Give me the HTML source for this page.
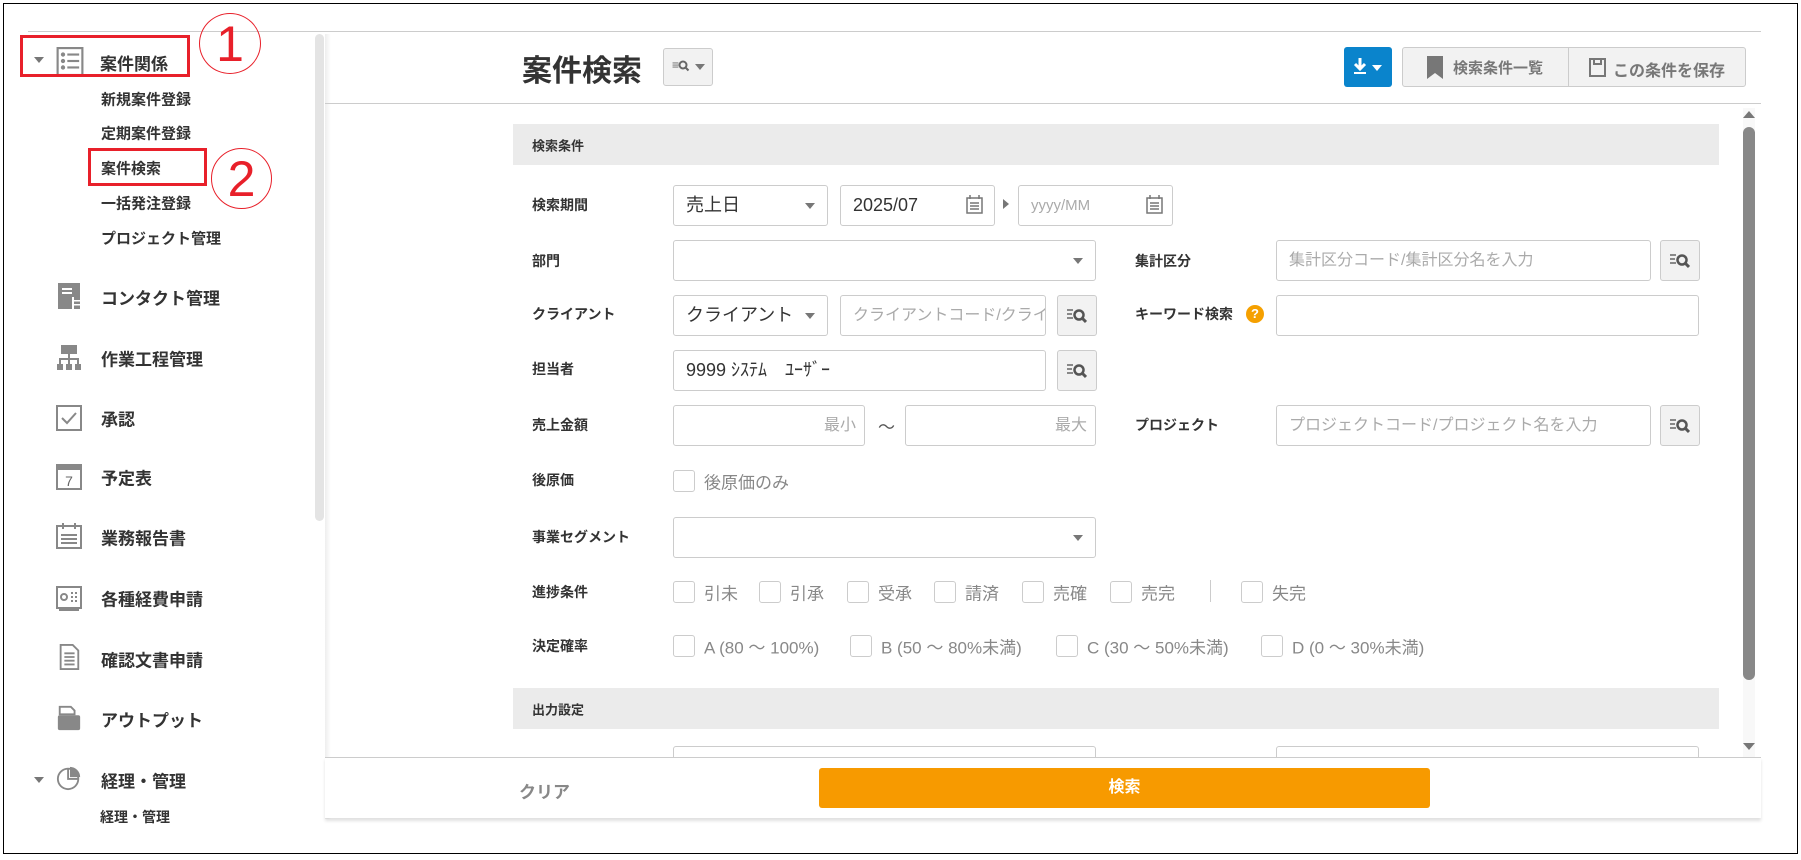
<!DOCTYPE html>
<html><head><meta charset="utf-8"><style>
*{box-sizing:border-box;margin:0;padding:0}
body{width:1801px;height:860px;background:#fff;position:relative;overflow:hidden;font-family:"Liberation Sans","Noto Sans CJK JP",sans-serif;color:#333}
.a{position:absolute}
.b{font-weight:bold}
.si{position:absolute;left:101px;font-size:17px;font-weight:bold;transform:translateY(-50%);white-space:nowrap}
.sub{position:absolute;left:101px;font-size:15px;font-weight:bold;transform:translateY(-50%);white-space:nowrap}
.lb{position:absolute;left:532px;font-size:14px;font-weight:bold;transform:translateY(-50%);white-space:nowrap}
.in{position:absolute;border:1px solid #ccc;border-radius:3px;background:#fff;height:41px;font-size:18px;line-height:39px;padding-left:12px;white-space:nowrap;overflow:hidden}
.ph{color:#aaa;font-size:16px}
.dd:after{content:"";position:absolute;right:12px;top:17px;border-left:5px solid transparent;border-right:5px solid transparent;border-top:6px solid #777}
.sb{position:absolute;width:40px;height:41px;border:1px solid #ccc;border-radius:3px;background:#f2f2f2}
.cb{position:absolute;width:22px;height:22px;border:1px solid #ccc;border-radius:3px;transform:translateY(-50%)}
.ct{position:absolute;font-size:17px;color:#888;transform:translateY(-50%);white-space:nowrap}
.ic{position:absolute;left:56px;width:26px;height:26px}
.circ{position:absolute;border:1.5px solid #e8202a;border-radius:50%;color:#e8202a;font-size:50px;text-align:center;line-height:60px}
</style></head><body>
<div class="a" style="left:3px;top:3px;width:1795px;height:851px;border:1px solid #000"></div>
<div class="a" style="left:28px;top:31px;width:1733px;height:1px;background:#ccc"></div>
<!-- sidebar -->
<div class="a" style="left:315px;top:34px;width:9px;height:487px;background:#e4e4e4;border-radius:5px"></div>
<div class="a" style="left:325px;top:34px;width:6px;height:785px;background:linear-gradient(90deg,#eee,#fff)"></div>
<div class="a" style="left:34px;top:57px;border-left:5px solid transparent;border-right:5px solid transparent;border-top:6px solid #777"></div>
<svg class="a" style="left:56px;top:47px" width="28" height="28" viewBox="0 0 25 26"><rect x="1" y="1" width="23" height="25" fill="none" stroke="#888" stroke-width="2"/><circle cx="6" cy="7" r="2" fill="#888"/><circle cx="6" cy="13" r="2" fill="#888"/><circle cx="6" cy="19" r="2" fill="#888"/><rect x="10" y="6" width="11" height="2" fill="#888"/><rect x="10" y="12" width="11" height="2" fill="#888"/><rect x="10" y="18" width="11" height="2" fill="#888"/></svg>
<div class="a b" style="left:100px;top:50px;font-size:17px">案件関係</div>
<div class="a" style="left:20px;top:35px;width:170px;height:42px;border:3px solid #e8202a"></div>
<div class="circ" style="left:199px;top:13px;width:62px;height:61px">1</div>
<div class="sub" style="top:99px">新規案件登録</div>
<div class="sub" style="top:133px">定期案件登録</div>
<div class="sub" style="top:168px">案件検索</div>
<div class="a" style="left:88px;top:148px;width:119px;height:38px;border:3px solid #e8202a"></div>
<div class="circ" style="left:211px;top:148px;width:61px;height:61px">2</div>
<div class="sub" style="top:203px">一括発注登録</div>
<div class="sub" style="top:238px">プロジェクト管理</div>

<svg class="ic" style="top:283px" viewBox="0 0 26 26"><rect x="2" y="0" width="22" height="26" fill="#888"/><rect x="6" y="5" width="10" height="2" fill="#fff"/><rect x="6" y="9" width="10" height="2" fill="#fff"/><rect x="16" y="14" width="2" height="12" fill="#fff"/><rect x="18" y="17" width="6" height="1.5" fill="#fff"/><rect x="18" y="21" width="6" height="1.5" fill="#fff"/></svg>
<div class="si" style="top:297px">コンタクト管理</div>
<svg class="ic" style="top:345px" viewBox="0 0 26 26"><rect x="5" y="0" width="16" height="9" fill="#888"/><path d="M13 9v5M3 14h20M4 14v6M13 14v6M22 14v6" stroke="#888" stroke-width="2" fill="none"/><rect x="1" y="19" width="6" height="6" fill="#888"/><rect x="10" y="19" width="6" height="6" fill="#888"/><rect x="19" y="19" width="6" height="6" fill="#888"/></svg>
<div class="si" style="top:358px">作業工程管理</div>
<svg class="ic" style="top:405px" viewBox="0 0 26 26"><rect x="1" y="1" width="24" height="24" fill="none" stroke="#888" stroke-width="2"/><path d="M6 13l5 5 9-10" stroke="#888" stroke-width="2" fill="none"/></svg>
<div class="si" style="top:418px">承認</div>
<svg class="ic" style="top:464px" viewBox="0 0 26 26"><rect x="1" y="1" width="24" height="24" fill="none" stroke="#888" stroke-width="2"/><rect x="1" y="1" width="24" height="5" fill="#888"/><text x="13" y="22" font-size="14" fill="#666" text-anchor="middle" font-family="Liberation Sans">7</text></svg>
<div class="si" style="top:477px">予定表</div>
<svg class="ic" style="top:523px" viewBox="0 0 26 26"><rect x="1" y="3" width="24" height="22" fill="none" stroke="#888" stroke-width="2"/><path d="M7 0v6M19 0v6M5 12h16M5 16h16M5 20h16" stroke="#888" stroke-width="2"/></svg>
<div class="si" style="top:537px">業務報告書</div>
<svg class="ic" style="top:585px" viewBox="0 0 26 26"><rect x="1" y="2" width="24" height="21" fill="none" stroke="#888" stroke-width="2"/><circle cx="8" cy="12" r="3" fill="none" stroke="#888" stroke-width="2"/><path d="M15 8h2M19 8h2M15 12h2M19 12h2M15 16h2M19 16h2M3 25h20" stroke="#888" stroke-width="2"/></svg>
<div class="si" style="top:598px">各種経費申請</div>
<svg class="ic" style="top:644px" viewBox="0 0 26 28"><path d="M4 1h13l6 6v20H4z" fill="none" stroke="#888" stroke-width="2"/><path d="M8 10h11M8 14h11M8 18h11M8 22h11" stroke="#888" stroke-width="2"/></svg>
<div class="si" style="top:659px">確認文書申請</div>
<svg class="ic" style="top:705px" viewBox="0 0 26 28"><path d="M3 2h12l4 4v4H3z" fill="none" stroke="#888" stroke-width="2"/><rect x="1" y="11" width="24" height="16" rx="2" fill="#888"/></svg>
<div class="si" style="top:719px">アウトプット</div>
<div class="a" style="left:34px;top:777px;border-left:5px solid transparent;border-right:5px solid transparent;border-top:6px solid #777"></div>
<svg class="ic" style="top:765px" viewBox="0 0 26 28"><circle cx="12" cy="15" r="11" fill="none" stroke="#888" stroke-width="2"/><path d="M14 2a11 11 0 0 1 11 11H14z" fill="#888"/><path d="M12 4v11h11" stroke="#888" stroke-width="2" fill="none"/></svg>
<div class="si" style="top:780px">経理・管理</div>
<div class="a b" style="left:100px;top:807px;font-size:14px">経理・管理</div>

<!-- header -->
<div class="a b" style="left:522px;top:46px;font-size:30px;color:#333">案件検索</div>
<div class="a" style="left:663px;top:48px;width:50px;height:38px;border:1px solid #ccc;border-radius:3px;background:#f2f2f2"></div>
<div class="a" style="left:672px;top:58px;font-size:12px;color:#666">≡</div>
<svg class="a" style="left:678px;top:60px" width="12" height="12"><circle cx="5" cy="5" r="3.5" fill="none" stroke="#666" stroke-width="2"/><path d="M7.5 7.5l3 3" stroke="#666" stroke-width="2"/></svg>
<div class="a" style="left:695px;top:64px;border-left:5px solid transparent;border-right:5px solid transparent;border-top:6px solid #777"></div>
<div class="a" style="left:1344px;top:47px;width:48px;height:40px;background:#0a84cc;border-radius:3px"></div>
<svg class="a" style="left:1353px;top:57px" width="32" height="20"><path d="M7 1v10M2 7l5 5 5-5" stroke="#fff" stroke-width="3" fill="none"/><rect x="1" y="15" width="12" height="2" fill="#fff"/><path d="M19 8h10l-5 6z" fill="#fff"/></svg>
<div class="a" style="left:1402px;top:47px;width:344px;height:40px;border:1px solid #ccc;border-radius:3px;background:#f2f2f2"></div>
<div class="a" style="left:1568px;top:48px;width:1px;height:38px;background:#ccc"></div>
<svg class="a" style="left:1427px;top:56px" width="16" height="24"><path d="M0 0h16v23l-8-6-8 6z" fill="#777"/></svg>
<div class="a b" style="left:1453px;top:57px;font-size:15px;color:#777">検索条件一覧</div>
<svg class="a" style="left:1589px;top:58px" width="18" height="19"><path d="M1 1h15v17H1z" fill="none" stroke="#777" stroke-width="2"/><path d="M5 1v5h7V1" stroke="#777" stroke-width="2" fill="none"/></svg>
<div class="a b" style="left:1613px;top:57px;font-size:16px;color:#777">この条件を保存</div>
<div class="a" style="left:325px;top:103px;width:1436px;height:1px;background:#ccc"></div>
<!-- scrollbar -->
<div class="a" style="left:1743px;top:108px;width:12px;height:650px;background:#f8f8f8"></div>
<div class="a" style="left:1743px;top:111px;border-left:6px solid transparent;border-right:6px solid transparent;border-bottom:7px solid #777"></div>
<div class="a" style="left:1743px;top:127px;width:12px;height:553px;background:#888;border-radius:6px"></div>
<div class="a" style="left:1743px;top:743px;border-left:6px solid transparent;border-right:6px solid transparent;border-top:7px solid #777"></div>

<!-- form -->
<div class="a" style="left:513px;top:124px;width:1206px;height:41px;background:#ebebeb"></div>
<div class="lb" style="top:145px;font-size:13px">検索条件</div>
<div class="lb" style="top:205px">検索期間</div>
<div class="in dd" style="left:673px;top:185px;width:155px">売上日</div>
<div class="in" style="left:840px;top:185px;width:155px">2025/07</div>
<svg class="a" style="left:966px;top:195px" width="17" height="19"><rect x="1" y="3" width="15" height="15" fill="none" stroke="#777" stroke-width="1.5"/><path d="M4 0v4M13 0v4M4 8h9M4 11h9M4 14h9" stroke="#777" stroke-width="1.5"/></svg>
<div class="a" style="left:1003px;top:199px;border-top:5px solid transparent;border-bottom:5px solid transparent;border-left:6px solid #777"></div>
<div class="in ph" style="left:1018px;top:185px;width:155px;font-size:15px">yyyy/MM</div>
<svg class="a" style="left:1146px;top:195px" width="17" height="19"><rect x="1" y="3" width="15" height="15" fill="none" stroke="#777" stroke-width="1.5"/><path d="M4 0v4M13 0v4M4 8h9M4 11h9M4 14h9" stroke="#777" stroke-width="1.5"/></svg>

<div class="lb" style="top:261px">部門</div>
<div class="in dd" style="left:673px;top:240px;width:423px"></div>
<div class="lb" style="left:1135px;top:261px">集計区分</div>
<div class="in ph" style="left:1276px;top:240px;width:375px">集計区分コード/集計区分名を入力</div>

<div class="lb" style="top:314px">クライアント</div>
<div class="in dd" style="left:673px;top:295px;width:155px">クライアント</div>
<div class="in ph" style="left:840px;top:295px;width:206px">クライアントコード/クライアント</div>
<div class="lb" style="left:1135px;top:314px">キーワード検索</div>
<div class="a" style="left:1246px;top:305px;width:18px;height:18px;border-radius:50%;background:#f5a000;color:#fff;font-size:13px;font-weight:bold;text-align:center;line-height:18px">?</div>
<div class="in" style="left:1276px;top:295px;width:423px"></div>

<div class="lb" style="top:369px">担当者</div>
<div class="in" style="left:673px;top:350px;width:373px">9999 ｼｽﾃﾑ　ﾕｰｻﾞｰ</div>

<div class="lb" style="top:425px">売上金額</div>
<div class="in ph" style="left:673px;top:405px;width:192px;text-align:right;padding-right:8px">最小</div>
<div class="a" style="left:878px;top:413px;font-size:17px;color:#555">～</div>
<div class="in ph" style="left:905px;top:405px;width:191px;text-align:right;padding-right:8px">最大</div>
<div class="lb" style="left:1135px;top:425px">プロジェクト</div>
<div class="in ph" style="left:1276px;top:405px;width:375px">プロジェクトコード/プロジェクト名を入力</div>

<div class="lb" style="top:480px">後原価</div>
<div class="cb" style="left:673px;top:481px"></div><div class="ct" style="left:704px;top:481px">後原価のみ</div>

<div class="lb" style="top:537px">事業セグメント</div>
<div class="in dd" style="left:673px;top:517px;width:423px"></div>

<div class="lb" style="top:592px">進捗条件</div>
<div class="cb" style="left:673px;top:592px"></div><div class="ct" style="left:704px;top:592px">引未</div>
<div class="cb" style="left:759px;top:592px"></div><div class="ct" style="left:790px;top:592px">引承</div>
<div class="cb" style="left:847px;top:592px"></div><div class="ct" style="left:878px;top:592px">受承</div>
<div class="cb" style="left:934px;top:592px"></div><div class="ct" style="left:965px;top:592px">請済</div>
<div class="cb" style="left:1022px;top:592px"></div><div class="ct" style="left:1053px;top:592px">売確</div>
<div class="cb" style="left:1110px;top:592px"></div><div class="ct" style="left:1141px;top:592px">売完</div>
<div class="a" style="left:1210px;top:580px;width:1px;height:22px;background:#ccc"></div>
<div class="cb" style="left:1241px;top:592px"></div><div class="ct" style="left:1272px;top:592px">失完</div>

<div class="lb" style="top:646px">決定確率</div>
<div class="cb" style="left:673px;top:646px"></div><div class="ct" style="left:704px;top:646px">A (80 ～ 100%)</div>
<div class="cb" style="left:850px;top:646px"></div><div class="ct" style="left:881px;top:646px">B (50 ～ 80%未満)</div>
<div class="cb" style="left:1056px;top:646px"></div><div class="ct" style="left:1087px;top:646px">C (30 ～ 50%未満)</div>
<div class="cb" style="left:1261px;top:646px"></div><div class="ct" style="left:1292px;top:646px">D (0 ～ 30%未満)</div>

<div class="a" style="left:513px;top:688px;width:1206px;height:41px;background:#ebebeb"></div>
<div class="lb" style="top:709px;font-size:13px">出力設定</div>
<div class="in" style="left:673px;top:746px;width:423px"></div>
<div class="in" style="left:1276px;top:746px;width:423px"></div>

<!-- footer -->
<div class="a" style="left:325px;top:757px;width:1436px;height:61px;background:#fff;border-top:1px solid #ccc;box-shadow:0 3px 3px rgba(0,0,0,0.12)"></div>
<div class="a b" style="left:519px;top:778px;font-size:17px;color:#888">クリア</div>
<div class="a b" style="left:819px;top:768px;width:611px;height:40px;background:#f79a00;border-radius:3px;color:#fff;font-size:16px;text-align:center;line-height:40px">検索</div>

<!-- search buttons -->
<div class="sb" style="left:1660px;top:240px"></div>
<div class="sb" style="left:1057px;top:295px"></div>
<div class="sb" style="left:1057px;top:350px"></div>
<div class="sb" style="left:1660px;top:405px"></div>
<svg width="0" height="0" style="position:absolute"><defs><g id="q"><path d="M0 2h6M0 6h5M0 10h6" stroke="#666" stroke-width="1.5"/><circle cx="12" cy="7" r="4.5" fill="none" stroke="#555" stroke-width="2.5"/><path d="M15 10l4 4" stroke="#555" stroke-width="3"/></g></defs></svg>
<svg class="a" style="left:1670px;top:253px" width="20" height="16"><use href="#q"/></svg>
<svg class="a" style="left:1067px;top:308px" width="20" height="16"><use href="#q"/></svg>
<svg class="a" style="left:1067px;top:363px" width="20" height="16"><use href="#q"/></svg>
<svg class="a" style="left:1670px;top:418px" width="20" height="16"><use href="#q"/></svg>
</body></html>
